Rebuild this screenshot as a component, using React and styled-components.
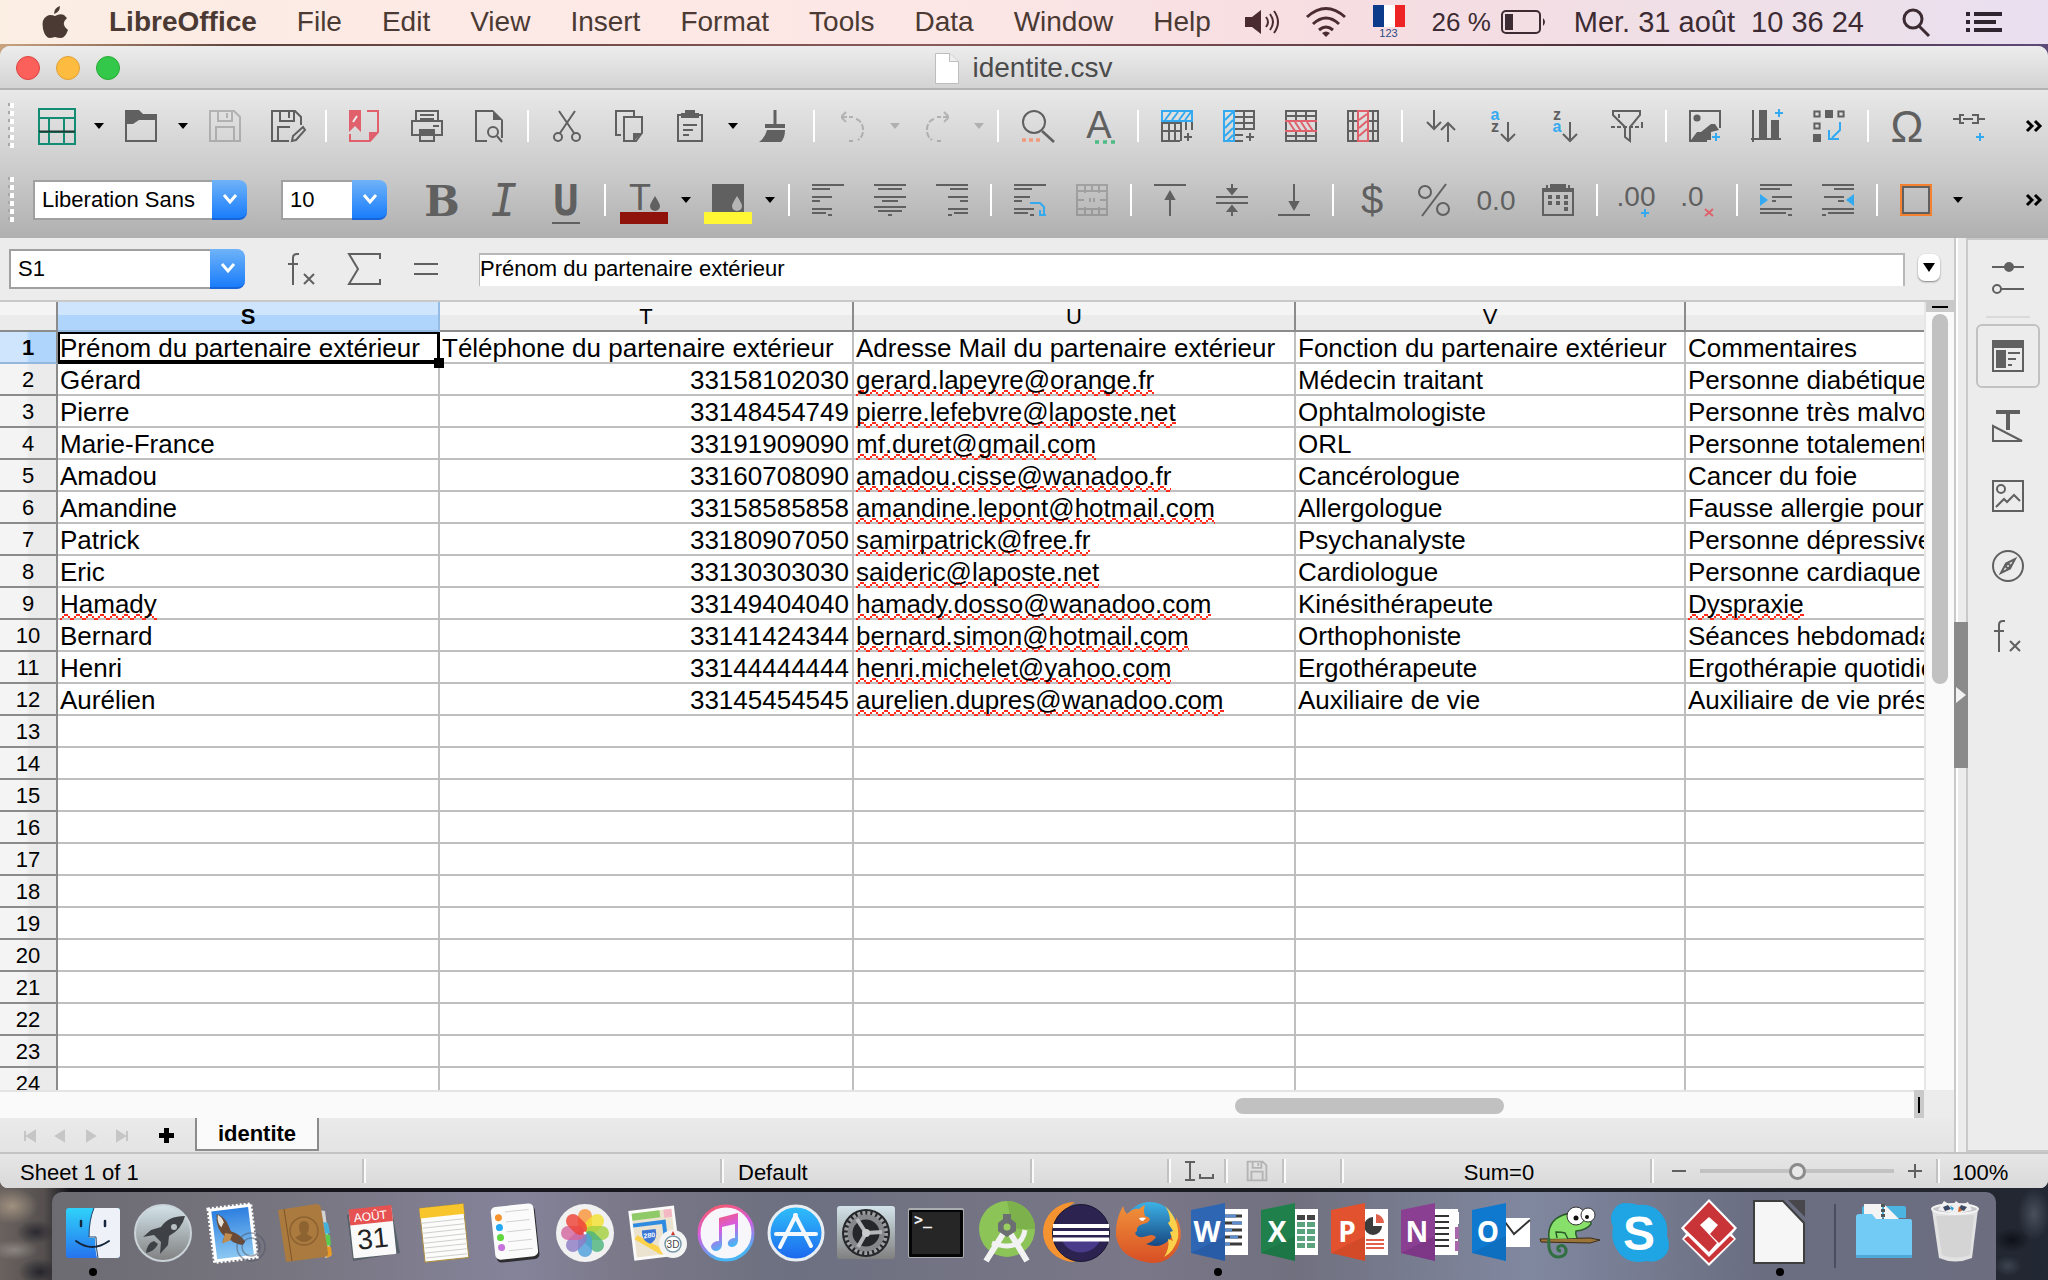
import React from "react";
import styled, { createGlobalStyle, css } from "styled-components";

const INK = "#606060";
const BLUE = "#33aaf0";
const RED = "#e0606c";
const UI = `"Liberation Sans", Arial, sans-serif`;
const NARROW = `"Liberation Sans Narrow", "Liberation Sans", sans-serif`;

const GlobalStyle = createGlobalStyle`
  *, *::before, *::after { box-sizing: border-box; }
  html, body, #root { height: 100%; margin: 0; }
  body { font-family: ${UI}; font-size: 22px; color: #000; overflow: hidden; }
  button, input, select { font: inherit; color: inherit; margin: 0; }
  button { border: 0; padding: 0; background: none; }
`;

/* ---------- desktop and menu bar ---------- */

const Desktop = styled.div`
  display: flex;
  flex-direction: column;
  height: 100%;
  background:
    linear-gradient(90deg, #c9a27e 0, #5c403c 12%, #8a5a5c 45%, #4c3038 80%, #5d4a78 100%) top / 100% 60px no-repeat,
    radial-gradient(ellipse 26px 18px at 12px calc(100% - 74px), #a0917f, transparent),
    radial-gradient(ellipse 20px 12px at 36px calc(100% - 48px), #2b2a30, transparent),
    radial-gradient(ellipse 24px 10px at 14px calc(100% - 30px), #8b8580, transparent),
    radial-gradient(ellipse 22px 14px at 40px calc(100% - 8px), #25252b, transparent),
    radial-gradient(ellipse 16px 26px at calc(100% - 14px) calc(100% - 66px), #4a505c, transparent),
    radial-gradient(ellipse 18px 12px at calc(100% - 36px) calc(100% - 40px), #0e1118, transparent),
    radial-gradient(ellipse 14px 10px at calc(100% - 40px) calc(100% - 14px), #3d4450, transparent),
    linear-gradient(90deg, #6a625f 0, #55504f 44px, #14141a 70px, #191a20 50%, #23262e 96%, #222834 100%);
`;

const MenuBar = styled.header`
  display: flex;
  align-items: center;
  justify-content: space-between;
  flex: none;
  height: 44px;
  margin-bottom: 2px;
  padding: 0 46px 0 41px;
  line-height: 44px;
  font-size: 28px;
  background: linear-gradient(90deg, #fbeee3 0, #fdeae5 18%, #fde7e6 45%, #f6dde1 66%, #ede0e9 90%, #e9dff0 100%);
`;

const MenuGroup = styled.div`
  display: flex;
  align-items: center;
  gap: ${(p) => p.$gap}px;
  color: ${(p) => p.$color};
`;

const MenuItem = styled.button`
  white-space: nowrap;
  font-weight: ${(p) => (p.$bold ? "bold" : "normal")};
`;

const Battery = styled.div`
  display: flex;
  align-items: center;
  gap: 10px;
  font-size: 26px;
`;

const Clock = styled.span`
  font-size: 29px;
  white-space: pre;
`;

const Flag = styled.div`
  display: flex;
  flex-direction: column;
  align-items: center;
  font-size: 11px;
  line-height: 12px;
  color: #2b4a80;
`;

/* ---------- window ---------- */

const Window = styled.section`
  display: flex;
  flex-direction: column;
  flex: 1;
  min-height: 0;
  overflow: hidden;
  border-radius: 10px 10px 8px 8px;
  background: #ececec;
`;

const TitleBar = styled.div`
  display: grid;
  grid-template-columns: 1fr auto 1fr;
  align-items: center;
  flex: none;
  height: 44px;
  padding: 2px 16px 0;
  border-bottom: 2px solid #b2b2b2;
  background: linear-gradient(#ededed, #d3d3d3);
`;

const Lights = styled.div`
  display: flex;
  gap: 16px;
`;

const Light = styled.button`
  width: 24px;
  height: 24px;
  border-radius: 50%;
  border: 1px solid ${(p) => p.$edge};
  background: ${(p) => p.$fill};
`;

const Title = styled.h1`
  display: flex;
  align-items: center;
  gap: 13px;
  margin: 0;
  font-size: 28px;
  font-weight: normal;
  line-height: 34px;
  color: #4b4b4b;
`;

const ToolbarArea = styled.div`
  display: flex;
  flex-direction: column;
  gap: 2px;
  flex: none;
  height: 148px;
  background: linear-gradient(#e8e8e8, #cecece 50%, #b0b0b0);
`;

const ToolRow = styled.div`
  display: flex;
  align-items: center;
  height: 72px;
  padding: 0 6px 0 8px;
`;

const Handle = styled.span`
  flex: none;
  width: 6px;
  height: 46px;
  margin-right: ${(p) => p.$after}px;
  background:
    repeating-linear-gradient(#fff 0 5px, transparent 5px 8px) right / 4px 100% no-repeat,
    repeating-linear-gradient(#a8a8a8 0 3px, transparent 3px 8px) left / 2px 100% no-repeat;
`;

const ToolButton = styled.button`
  display: flex;
  align-items: center;
  justify-content: center;
  flex: none;
  width: 62px;
  height: 62px;
  opacity: ${(p) => (p.disabled ? 0.35 : 1)};
`;

const CaretButton = styled.button`
  flex: none;
  width: 22px;
  height: 40px;
  opacity: ${(p) => (p.disabled ? 0.2 : 1)};
  &::before {
    content: "";
    display: block;
    width: 0;
    margin: 0 auto;
    border: 5px solid transparent;
    border-top: 6px solid #000;
    border-bottom: 0;
  }
`;

const Divider = styled.span`
  flex: none;
  width: 2px;
  height: 32px;
  margin: 0 7px;
  background: #fff;
`;

const More = styled.button`
  margin-left: auto;
`;

const Combo = styled.label`
  display: flex;
  flex: none;
  width: ${(p) => p.$width}px;
  height: 40px;
  margin-right: ${(p) => p.$after}px;
`;

const ComboSelect = styled.select`
  flex: 1;
  min-width: 0;
  height: 40px;
  padding: 0 0 1px 7px;
  appearance: none;
  border: 2px solid #a0a0a0;
  border-width: 2px 0 2px 2px;
  border-radius: 0;
  background: #fff;
  outline: none;
`;

const ComboArrow = styled.span`
  display: flex;
  align-items: center;
  justify-content: center;
  width: 35px;
  border-radius: 0 8px 8px 0;
  border-bottom: 2px solid #1763d8;
  background: linear-gradient(#6fb3f8, #1a7dfb);
`;

const Main = styled.div`
  display: flex;
  flex: 1;
  min-height: 0;
`;

const Workspace = styled.main`
  display: flex;
  flex-direction: column;
  flex: 1;
  min-width: 0;
`;

const FormulaBar = styled.div`
  display: flex;
  align-items: center;
  flex: none;
  height: 64px;
  padding: 0 14px 0 9px;
  border-bottom: 2px solid #c9c9c9;
`;

const FormulaButtons = styled.div`
  display: flex;
  width: 192px;
  margin: 0 16px 0 26px;
`;

const FormulaInput = styled.input`
  flex: 1;
  min-width: 0;
  height: 33px;
  margin-right: 13px;
  padding: 0 0 3px 0;
  border: 2px solid #b8b8b8;
  border-width: 2px 2px 0 1px;
  background: #fff;
  outline: none;
`;

const ExpandButton = styled.button`
  width: 22px;
  height: 27px;
  margin-bottom: 4px;
  border-radius: 7px;
  background: #fff;
  box-shadow: 0 1px 2px rgba(0, 0, 0, 0.45);
  &::before {
    content: "";
    display: block;
    width: 0;
    margin: 0 auto;
    border: 6px solid transparent;
    border-top: 9px solid #000;
    border-bottom: 0;
  }
`;

/* ---------- sheet ---------- */

const SheetRow = styled.div`
  display: flex;
  flex: 1;
  min-height: 0;
`;

const SheetView = styled.div`
  flex: 1;
  min-width: 0;
  overflow: hidden;
  background: #fff;
`;

const Table = styled.table`
  width: 100%;
  table-layout: fixed;
  border-collapse: separate;
  border-spacing: 0;
`;

const Col = styled.col`
  width: ${(p) => (p.$width ? `${p.$width}px` : "auto")};
`;

const ColHead = styled.th`
  height: 30px;
  padding: 2px 0 0;
  line-height: 26px;
  font-weight: ${(p) => (p.$active ? "bold" : "normal")};
  border-right: 2px solid ${(p) => (p.$active ? "#94bce4" : "#8b8b8b")};
  border-bottom: 2px solid ${(p) => (p.$active ? "#94b8dc" : "#8b8b8b")};
  background: ${(p) =>
    p.$active
      ? "linear-gradient(#cfe5fe 0 13px, #b0d5fc 13px)"
      : "linear-gradient(#f4f4f4 0 13px, #ebebeb 13px)"};
  &:first-child { border-right-color: #8b8b8b; }
  &:last-child { border-right: 0; }
`;

const RowHead = styled.th`
  height: 32px;
  padding: 2px 0 0;
  line-height: 28px;
  font-weight: ${(p) => (p.$active ? "bold" : "normal")};
  border-right: 2px solid #8b8b8b;
  border-bottom: 2px solid ${(p) => (p.$active ? "#94b8dc" : "#8b8b8b")};
  background: ${(p) =>
    p.$active
      ? "linear-gradient(90deg, #cfe5fe 0 26px, #b0d5fc 30px)"
      : "linear-gradient(90deg, #f4f4f4 0 26px, #ebebeb 30px)"};
`;

const Cell = styled.td`
  height: 32px;
  padding: 2px 3px 0 2px;
  font-size: 26px;
  line-height: 28px;
  white-space: nowrap;
  text-align: ${(p) => (p.$number ? "right" : "left")};
  border-right: 2px solid #bfbfbf;
  border-bottom: 2px solid #bfbfbf;
  &:last-child { border-right: 0; }
  ${(p) =>
    p.$active &&
    css`
      position: relative;
      &::before {
        content: "";
        position: absolute;
        inset: 0 -2px -2px 0;
        border: solid #000;
        border-width: 2px 3px 4px 2px;
      }
      &::after {
        content: "";
        position: absolute;
        right: -6px;
        bottom: -6px;
        width: 10px;
        height: 10px;
        background: #000;
      }
    `}
`;

const Misspelled = styled.span`
  display: inline-block;
  height: 30px;
  margin-bottom: -2px;
  vertical-align: top;
  background:
    linear-gradient(90deg, transparent 4px, #ff2a1a 4px 8px, transparent 8px) 0 24px / 12px 2px repeat-x,
    linear-gradient(90deg, transparent 2px, #ff2a1a 2px 4px, transparent 4px 8px, #ff2a1a 8px 10px, transparent 10px) 0 26px / 12px 2px repeat-x,
    linear-gradient(90deg, #ff2a1a 2px, transparent 2px 10px, #ff2a1a 10px) 0 28px / 12px 2px repeat-x;
`;

const VScroll = styled.div`
  display: flex;
  flex-direction: column;
  align-items: center;
  flex: none;
  width: 30px;
  border-left: 2px solid #e6e6e6;
  background: #fafafa;
`;

const SplitTop = styled.div`
  flex: none;
  width: 28px;
  height: 10px;
  padding: 4px 6px;
  background: #c9c9c9;
  &::before {
    content: "";
    display: block;
    width: 16px;
    height: 2px;
    background: #000;
  }
`;

const VThumb = styled.div`
  width: 16px;
  height: 47%;
  margin-top: 2px;
  border-radius: 8px;
  background: #c1c1c1;
`;

const HScroll = styled.div`
  display: flex;
  flex: none;
  height: 28px;
  padding-right: 30px;
`;

const HTrack = styled.div`
  flex: 1;
  padding: 6px 0;
  border-top: 2px solid #e4e4e4;
  background: #fafafa;
`;

const HThumb = styled.div`
  width: 14.1%;
  height: 16px;
  margin-left: 64.5%;
  border-radius: 8px;
  background: #c1c1c1;
`;

const SplitRight = styled.div`
  width: 10px;
  padding: 7px 4px;
  background: #c9c9c9;
  &::before {
    content: "";
    display: block;
    width: 2px;
    height: 16px;
    background: #000;
  }
`;

const TabBar = styled.div`
  display: flex;
  align-items: flex-start;
  flex: none;
  height: 34px;
  padding-left: 13px;
  background: linear-gradient(#eaeaea, #e4e4e4);
`;

const TabNav = styled.button`
  width: 31px;
  height: 34px;
`;

const AddTab = styled.button`
  width: 34px;
  height: 34px;
  margin: 0 12px;
`;

const SheetTab = styled.button`
  width: 124px;
  height: 33px;
  font-weight: bold;
  border: 2px solid #8b8b8b;
  border-top: 0;
  background: #fafafa;
`;

/* ---------- splitter and sidebar ---------- */

const Splitter = styled.div`
  display: flex;
  align-items: center;
  flex: none;
  width: 14px;
  border: 2px solid #c9c9c9;
  border-width: 0 2px;
  background: linear-gradient(90deg, #fff 2px, #ececec 2px);
`;

const Grip = styled.button`
  display: flex;
  align-items: center;
  justify-content: center;
  flex: none;
  width: 14px;
  height: 146px;
  margin: 0 -2px;
  background: #8a8a8a;
`;

const Sidebar = styled.aside`
  display: flex;
  flex-direction: column;
  align-items: center;
  gap: 6px;
  flex: none;
  width: 80px;
  padding-top: 6px;
  border-top: 2px solid #c9c9c9;
  border-bottom: 2px solid #c9c9c9;
`;

const SideButton = styled.button`
  display: flex;
  align-items: center;
  justify-content: center;
  width: 64px;
  height: 64px;
  border: 2px solid ${(p) => (p.$active ? "#c2c2c2" : "transparent")};
  border-radius: 6px;
`;

const SideRule = styled.hr`
  width: 44px;
  height: 2px;
  margin: 0;
  border: 0;
  background: #dadada;
`;

/* ---------- status bar ---------- */

const StatusBar = styled.footer`
  display: grid;
  grid-template-columns: 366fr 358fr 310fr 137fr 57fr 58fr 58fr 310fr 286fr 108fr;
  align-items: center;
  flex: none;
  height: 36px;
  border-top: 2px solid #c4c4c4;
  background: linear-gradient(#e6e6e6, #d9d9d9);
`;

const StatusCell = styled.div`
  display: flex;
  align-items: center;
  justify-content: ${(p) => (p.$left ? "flex-start" : "center")};
  height: 24px;
  padding-top: ${(p) => (p.$text ? 3 : 0)}px;
  padding-left: ${(p) => (p.$left ? 14 : 2)}px;
  white-space: nowrap;
  border-right: 2px solid #fafafa;
  box-shadow: inset -2px 0 #c2c2c2;
  &:first-child { padding-left: 20px; }
  &:last-child { border: 0; box-shadow: none; padding-left: 12px; }
`;

const ZoomRange = styled.input`
  width: 194px;
  height: 20px;
  margin: 0 14px;
  appearance: none;
  background: linear-gradient(#c2c2c2, #c2c2c2) center / 100% 4px no-repeat;
  &::-webkit-slider-thumb {
    appearance: none;
    width: 17px;
    height: 17px;
    border: 3px solid #8a8a8a;
    border-radius: 50%;
    background: #e8e8e8;
  }
`;

/* ---------- dock ---------- */

const Dock = styled.nav`
  display: flex;
  justify-content: space-between;
  flex: none;
  height: 88px;
  margin: 4px 52px 0;
  padding: 8px 6px 0;
  border-radius: 10px 10px 0 0;
  background: linear-gradient(90deg, #6c6b72 0, #77757f 12%, #85839a 24%, #7a7787 30%, #6c7080 38%, #7a7788 56%, #70707f 64%, #8088a0 76%, #6a6d80 88%, #6c6e80 100%);
`;

const DockItem = styled.button`
  display: flex;
  flex-direction: column;
  align-items: center;
  gap: 3px;
  width: 70px;
`;

const DockDot = styled.span`
  width: 8px;
  height: 8px;
  margin-top: 1px;
  border-radius: 50%;
  background: #000;
`;

const DockRule = styled.span`
  width: 2px;
  height: 64px;
  margin: 4px 13px 4px 19px;
  background: #4b4c60;
`;

/* ---------- drawings ---------- */

const Svg = styled.svg`
  display: block;
  flex: none;
  overflow: visible;
`;

const Glyph = ({ children, size = 32 }) => (
  <Svg width={size} height={size} viewBox="0 0 16 16" fill="none" stroke={INK} strokeWidth="1" aria-hidden="true">
    {children}
  </Svg>
);

const Letter = ({ x, y, size, family = UI, bold, italic, color = INK, children }) => (
  <text
    x={x}
    y={y}
    fontSize={size}
    fontFamily={family}
    fontWeight={bold ? "bold" : "normal"}
    fontStyle={italic ? "italic" : "normal"}
    textAnchor="middle"
    fill={color}
    stroke="none"
  >
    {children}
  </text>
);

const Plus = ({ x, y, color = BLUE }) => <path d={`M${x - 2} ${y}h4M${x} ${y - 2}v4`} stroke={color} />;

const fx = (
  <>
    <path d="M6.5 .5h-1q-2 0-2 2V16M1 5.5h5" />
    <path d="M9 10.5l5 5M14 10.5l-5 5" />
  </>
);

const disk = <path d="M.5 .5h12l3 3v12h-15zM4.5 .5v5h7v-5M9 1.5v2.5M3.5 15.5v-7h9v7" />;

const icons = {
  newSheet: (
    <>
      <path d="M-1 -.5h18v17.5h-18zM-1 4h18M-1 11h18M4 4v13M11.5 4v13" stroke="#128c73" />
      <path d="M-1 10.8h18" stroke="#1e3c34" />
    </>
  ),
  open: (
    <>
      <path d="M.5 5v10.5h15V3.5" />
      <path d="M0 0h7l2 2h7v3H7L4 7H0z" fill={INK} stroke="none" />
    </>
  ),
  save: disk,
  saveAs: (
    <>
      <path d="M9 15.5H.5V.5h11.5l3 3v4M4.5 .5v5h7v-5M9 1v3M3.5 15.5v-7h6" />
      <path d="M10.5 15.5l.5-2.5 5-4.5 1 1.500-4.500 5z" />
    </>
  ),
  pdf: (
    <>
      <path d="M9 .5h5.500V11l-4 4.500H.5V12" stroke={RED} />
      <path d="M0 0h6v11l-3-3-3 3zM10 16v-5h5z" fill={RED} stroke="none" />
      <path d="M4 3L2 6" stroke="#eee" />
    </>
  ),
  print: (
    <>
      <path d="M2.500 5V.5h11V5M4.500 2.500h7M4.500 4.500h7M4 12.500H.5v-7h15v7H12M11 8h3M4 10h8" />
      <path d="M4.500 10v5.500h7V10" />
      <path d="M4 10h8v3H4z" fill={INK} stroke="none" />
    </>
  ),
  preview: (
    <>
      <path d="M7 15.500H1.500V.5H10M14.500 5v9" />
      <path d="M10 0v5h5z" fill={INK} stroke="none" />
      <circle cx="10" cy="11" r="2.500" />
      <path d="M12 13l2.500 3" />
    </>
  ),
  cut: (
    <>
      <path d="M4 .5l7.500 11M12 .5l-7.500 11" />
      <circle cx="3.500" cy="13.500" r="2" />
      <circle cx="12.500" cy="13.500" r="2" />
    </>
  ),
  copy: (
    <>
      <path d="M4 12.500H1.500V.5h9V3M5.500 3.500h9v8l-3 4h-6z" />
      <path d="M10 16v-4.500h4.500z" fill={INK} stroke="none" />
    </>
  ),
  paste: (
    <>
      <path d="M1.500 2.500h12v13h-12zM4 7.500h7M4 10h5M4 12.500h3" />
      <path d="M3 4V1.500h2V0h5v1.500h2V4z" fill={INK} stroke="none" />
    </>
  ),
  brush: (
    <>
      <path d="M8 0v8" strokeWidth="1.500" />
      <path d="M3 7h10v2H3zM4 10h9q0 4-2 6H0q3-2 4-6z" fill={INK} stroke="none" />
    </>
  ),
  undo: <path d="M2 3.500h6M4.500 1L2 3.500 4.500 6M9.500 4.500c4 1 5 8 1 10.500M8 15.500H6" strokeDasharray="3 1" />,
  redo: <path d="M14 3.500H8M11.500 1L14 3.500 11.500 6M6.500 4.500c-4 1-5 8-1 10.500M8 15.500h2" strokeDasharray="3 1" />,
  find: (
    <>
      <ellipse cx="6.500" cy="6" rx="5.500" ry="5.500" />
      <path d="M10.500 10.500l6 5.500" strokeWidth="1.300" />
      <path d="M.5 15h10" stroke="#f19a7c" strokeWidth="1.800" strokeDasharray="2 1.500" />
    </>
  ),
  spelling: (
    <>
      <Letter x="8" y="14" size="19">A</Letter>
      <path d="M6 16h10" stroke="#4dbb84" strokeWidth="1.800" strokeDasharray="2 2" />
    </>
  ),
  rowInsert: (
    <>
      <path d="M.5 5v10.500h9M.5 10.500h9M4 6v9.500M7 6v9.500M10 6v9.500M.5 6.500h9M12.500 6v4M15.500 6v4" />
      <path d="M.5 .5h15v5H.5zM2 5l3-4M5.500 5l3-4M9 5l3-4M12 5l3-4" stroke={BLUE} />
      <Plus x={13.5} y={13.5} color={INK} />
    </>
  ),
  colInsert: (
    <>
      <path d="M6 .5h9.500V9.500H6M6 3.500h9.500M6 6.500h9.500M10.500 .5v9M6 12.500h4M6 15.500h4" />
      <path d="M.5 .5h5v15h-5zM1 5l4-4M1 9l4-4M1 13l4-4M2 15.500l3-3" stroke={BLUE} />
      <Plus x={13.5} y={13.5} color={INK} />
    </>
  ),
  rowDelete: (
    <>
      <path d="M.5 .5h15v15H.5zM.5 3h15M.5 13h15M5.500 .5v5M10.500 .5v5M5.500 11v4.500M10.500 11v4.500" />
      <path d="M0 5.500h16M0 10.500h16M2 6l3 4.500M5 6l3 4.500M8 6l3 4.500M11 6l3 4.500" stroke={RED} />
    </>
  ),
  colDelete: (
    <>
      <path d="M.5 .5h15v15H.5zM3 .5v15M13 .5v15M.5 5.500h5M.5 10.500h5M11 5.500h4.500M11 10.500h4.500" />
      <path d="M5.500 .5h5v15h-5zM6 5l4-3M6 9l4-3.500M6 13l4-3.500" stroke={RED} />
    </>
  ),
  sort: <path d="M4.500 0v9M1 6l3.500 3.500L8 6M11.500 16V7M8 10l3.500-3.500L15 10" />,
  sortAsc: (
    <>
      <Letter x="4" y="5" size="8" bold color={BLUE}>a</Letter>
      <Letter x="4" y="11" size="8" bold>z</Letter>
      <path d="M10.500 6v9.500M7 12l3.500 3.500L14 12" />
    </>
  ),
  sortDesc: (
    <>
      <Letter x="4" y="5" size="8" bold>z</Letter>
      <Letter x="4" y="11" size="8" bold color={BLUE}>a</Letter>
      <path d="M10.500 6v9.500M7 12l3.500 3.500L14 12" />
    </>
  ),
  filter: (
    <>
      <path d="M1 .5h13.500v2l-5 6v7L7 13.500v-5L1 2.500z" />
      <path d="M0 8.500h16M4 2v4M15.500 6v3" strokeDasharray="2 1" />
    </>
  ),
  image: (
    <>
      <path d="M9 15.500H.5V.5h15V9" />
      <circle cx="4" cy="4" r="1.800" fill={INK} stroke="none" />
      <path d="M1 15l3-4h2l5-4h2l2 3-4 1v4z" fill={INK} stroke="none" />
      <Plus x={13.5} y={13.5} />
    </>
  ),
  chart: (
    <>
      <path d="M1 0v16M0 14.500h15" />
      <path d="M4 0h4v14H4zM10 5h4v9h-4z" fill={INK} stroke="none" />
      <Plus x={14} y={1.5} />
    </>
  ),
  pivot: (
    <>
      <path d="M.7 .7h2.600v2.600H.7zM12.700 .7h2.600v2.600h-2.600zM.7 6.700h2.600v2.600H.7z" />
      <path d="M6 0h4v4H6zM0 12h4v4H0z" fill={INK} stroke="none" />
      <path d="M13.500 6v4l-4 4M8 10v4.500h5" stroke={BLUE} />
    </>
  ),
  omega: <Letter x="8" y="16" size="22">Ω</Letter>,
  link: (
    <>
      <path d="M0 4.500h3M5.500 2.500H3.500v4h2M5 4.500h5M9.500 2.500h3v4h-3M12.500 4.500h3.500" />
      <Plus x={13.5} y={13.5} />
    </>
  ),
  bold: <Letter x="8" y="16" size="21" family={`"DejaVu Serif", serif`} bold>B</Letter>,
  italic: <Letter x="8" y="16" size="22" family={`"DejaVu Sans Mono", monospace`} italic>I</Letter>,
  underline: (
    <>
      <Letter x="8" y="15.500" size="21" family={`"DejaVu Sans Mono", monospace`} bold>U</Letter>
      <path d="M1 19.500h14" />
    </>
  ),
  fontColor: (
    <>
      <Letter x="6" y="13" size="18">T</Letter>
      <path d="M13.500 6q2.500 4 2.500 5a2 2 0 0 1-5 0q0-1 2.500-5z" fill={INK} stroke="none" />
      <path d="M-4 14h24v6h-24z" fill="#90130b" stroke="none" />
    </>
  ),
  highlight: (
    <>
      <path d="M0 0h16v14H0z" fill={INK} stroke="none" />
      <path d="M12.500 6q2.500 4 2.500 5a2 2 0 0 1-5 0q0-1 2.500-5z" fill="#b5b5b5" stroke="none" />
      <path d="M-4 14h24v6h-24z" fill="#fff733" stroke="none" />
    </>
  ),
  left: <path d="M0 .5h16M0 2.500h9M0 6.500h10M0 8.500h4M0 12.500h10M0 14.500h7M8 15.500h2" />,
  center: <path d="M0 .5h16M2 2.500h12M0 6.500h16M4 8.500h8M0 11.500h16M2 13.500h12M7 15.500h2" />,
  right: <path d="M0 .5h16M7 2.500h9M6 6.500h10M12 8.500h4M6 12.500h10M9 14.500h7M6 15.500h2" />,
  wrap: (
    <>
      <path d="M0 .5h16M0 2.500h9M0 6.500h8M0 8.500h4M0 12.500h10M0 14.500h7M8 15.500h2" />
      <path d="M8 9.500h5l2 2v4M13 13v2.500h3" stroke={BLUE} />
    </>
  ),
  merge: <path d="M.5 .5h15v15H.5zM.5 3.500h15M.5 12.500h15M4.500 .5v4M8 .5v3M11.500 .5v4M4.500 11.500v4M8 12.500v3M11.500 11.500v4M0 8h4M12 8h4M7 7v2M9 7v2" />,
  top: (
    <>
      <path d="M0 .5h16M8 5v11" />
      <path d="M8 4l2 3.500H6z" fill={INK} />
    </>
  ),
  middle: (
    <>
      <path d="M0 6.500h16M0 9.500h16M8 0v3M8 13v3" />
      <path d="M8 5l2-2.500H6zM8 11l2 2.500H6z" fill={INK} />
    </>
  ),
  bottom: (
    <>
      <path d="M0 15.500h16M8 0v10" />
      <path d="M8 12.500l2-3.500H6z" fill={INK} />
    </>
  ),
  currency: <Letter x="8" y="15" size="20">$</Letter>,
  percent: (
    <>
      <circle cx="3.500" cy="4" r="3" />
      <circle cx="12.500" cy="12.500" r="3" />
      <path d="M14 0L2 16" />
    </>
  ),
  number: <Letter x="8" y="13" size="14" family={NARROW}>0.0</Letter>,
  date: (
    <>
      <path d="M.5 2v13.500h15V2M2.500 .5v2M13.500 .5v2" />
      <path d="M0 2h4V0h8v2h4v2H0z" fill={INK} stroke="none" />
      <path d="M3 6.500h10M3 9.500h10M11 12.500h2" strokeWidth="2" strokeDasharray="2 2" />
    </>
  ),
  addDecimal: (
    <>
      <Letter x="8" y="11" size="14" family={NARROW}>.00</Letter>
      <Plus x={12.5} y={14.5} />
    </>
  ),
  delDecimal: (
    <>
      <Letter x="5" y="11" size="14" family={NARROW}>.0</Letter>
      <path d="M11.500 12.500l4 3.500M15.500 12.500l-4 3.500" stroke={RED} />
    </>
  ),
  indent: (
    <>
      <path d="M0 .5h16M0 2.500h10M6 6.500h10M6 8.500h2M0 12.500h16M0 14.500h13M14 15.500h2" />
      <path d="M0 5l4 3-4 3z" fill={BLUE} stroke="none" />
    </>
  ),
  outdent: (
    <>
      <path d="M0 .5h16M6 2.500h10M1 6.500h10M8 8.500h3M0 12.500h16M3 14.500h13M0 15.500h2" />
      <path d="M16 5l-4 3 4 3z" fill={BLUE} stroke="none" />
    </>
  ),
  border: (
    <>
      <path d="M.5 .5h15v15H.5z" stroke="#f5812f" />
      <path d="M1.500 1.500h13v13h-13z" />
    </>
  ),
  fx,
  sum: <path d="M16 3V.5H.5L5 8 .5 15.500H16V13" />,
  equals: <path d="M2 5.500h12M2 10.500h12" />,
  settings: (
    <>
      <path d="M0 2.500h16M4 13.500h12" />
      <circle cx="8.500" cy="2.500" r="2" fill={INK} />
      <circle cx="2.500" cy="13.500" r="2" />
    </>
  ),
  properties: (
    <>
      <path d="M.5 .5h15v15H.5zM8 6.500h6M8 9.500h4M8 12.500h2" />
      <path d="M0 0h16v4H0zM2 5h5v9H2z" fill={INK} stroke="none" />
    </>
  ),
  styles: (
    <>
      <path d="M2 1h12M8 1v9" strokeWidth="2" />
      <path d="M.5 8v7.500H15z" />
    </>
  ),
  gallery: (
    <>
      <path d="M.5 .5h15v15H.5zM2 13.500l4-4 1.500 1.500L11 7.500l3 3" />
      <circle cx="4.500" cy="4.500" r="2" />
    </>
  ),
  navigator: (
    <>
      <circle cx="8" cy="8" r="7.500" />
      <path d="M11.500 4.500L9 9.200l-4.500 2.300L7 6.800z" />
      <circle cx="8" cy="8" r="1" />
    </>
  ),
};

const Office = ({ color, dark, letter, paper = "M34 9h28v46H34z", children }) => (
  <>
    <path d={paper} fill="#fff" />
    {children}
    <path d="M5 10l34-7v58L5 53z" fill={color} />
    <path d="M5 53L39 36v25z" fill={dark} opacity=".25" />
    <text x="21" y="42" fontSize="28" fontWeight="bold" fontFamily={`"Open Sans", sans-serif`} textAnchor="middle" fill="#fff">
      {letter}
    </text>
  </>
);

const petals = ["#f9953b", "#f2e02f", "#a5cf3f", "#4db37c", "#4f9fdc", "#8d7cc4", "#d4679f", "#ee4236"];

const dockArt = {
  Finder: (
    <>
      <rect x="5" y="8" width="54" height="50" rx="3" fill="url(#finderBlue)" />
      <path d="M33 8h23q3 0 3 3v44q0 3-3 3H36q-2-8-2-20h-6q0-18 5-30z" fill="#eef2f8" />
      <path d="M33 8q-5 12-5 29h7q0 12 2 21" fill="none" stroke="#22446c" strokeWidth="1" />
      <path d="M20 21v5M44 21v5" stroke="#16263c" strokeWidth="2.500" strokeLinecap="round" />
      <path d="M15 41q16 12 33 0" fill="none" stroke="#16263c" strokeWidth="2" strokeLinecap="round" />
    </>
  ),
  Launchpad: (
    <>
      <circle cx="32" cy="33" r="28" fill="url(#silver)" stroke="#c9d3d8" strokeWidth="2" />
      <path d="M54 16q-17 0-24 11l-10 3-8 7 11-2 7 7-1 12 8-9 1-9q13-7 16-20z" fill="#3e4246" />
      <path d="M23 41q-7 2-8 12 9-2 12-9z" fill="#3e4246" />
      <circle cx="43" cy="27" r="3" fill="#b6c0c4" />
    </>
  ),
  Mail: (
    <>
      <g transform="rotate(-7 32 32)">
        <rect x="9" y="6" width="43" height="54" fill="#fff" stroke="#fff" strokeWidth="3" strokeDasharray="2 2" />
        <rect x="12" y="9" width="37" height="48" fill="url(#sky)" />
        <path d="M17 12q6 3 9 9 2 6 3 10 9 4 13 12l-3 3q-8-2-12-7l-8 2 3-6q-8-9-5-23z" fill="#6b4b35" />
        <path d="M18 13q4 3 5 8l-3 5q-4-5-2-13z" fill="#e9e2d8" />
        <path d="M23 32l7 2-3 6-8 2z" fill="#c08b4f" />
      </g>
      <circle cx="49" cy="47" r="14" fill="none" stroke="#4d5468" strokeWidth="1.500" opacity=".5" />
      <circle cx="49" cy="47" r="9" fill="none" stroke="#4d5468" strokeWidth="1.500" opacity=".5" />
    </>
  ),
  Contacts: (
    <>
      <path d="M47 10l6 1 6 45-6 2z" fill="#d3d3d3" />
      <path d="M51 22l5 1 2 10-5 1z" fill="#46b2dc" />
      <path d="M53 34l5 1 1 10-5 1z" fill="#5ccb50" />
      <path d="M54 46l5 1 1 8-5 3z" fill="#e89a22" />
      <path d="M6 10l38-6q4 0 5 4l7 45q0 3-3 4l-39 5z" fill="#ab7a3f" />
      <path d="M12 9l8 52" stroke="#7d5526" strokeWidth="1" />
      <circle cx="32" cy="31" r="14" fill="none" stroke="#8d6331" strokeWidth="1.500" />
      <path d="M32 21q5 0 5 6 0 4-2 6 1 3 6 4-9 10-18 0 5-1 6-4-2-2-2-6 0-6 5-6z" fill="#8d6331" />
    </>
  ),
  Calendar: (
    <>
      <path d="M5 15l44-8 9 46-47 8z" fill="#566068" />
      <g transform="rotate(-6 32 32)">
        <rect x="9" y="9" width="43" height="47" rx="1" fill="#fafafa" />
        <rect x="9" y="7" width="43" height="16" fill="#e65252" />
        <text x="30" y="20" fontSize="12" fontFamily={UI} textAnchor="middle" fill="#fff">AOÛT</text>
        <text x="30" y="48" fontSize="28" fontFamily={UI} textAnchor="middle" fill="#222">31</text>
      </g>
    </>
  ),
  Notes: (
    <g transform="rotate(-6 32 32)">
      <rect x="10" y="6" width="44" height="54" fill="#fcfcfa" stroke="#a88d40" strokeWidth="1" />
      <rect x="10" y="6" width="44" height="10" fill="#f8c52c" />
      <path d="M11 21h42M11 26h42M11 31h42M11 36h42M11 41h42M11 46h42M11 51h42M11 56h42" stroke="#cfcfcf" strokeWidth="1" />
    </g>
  ),
  Reminders: (
    <g transform="rotate(-6 32 32)">
      <rect x="11" y="7" width="43" height="54" rx="5" fill="#2d2d30" />
      <rect x="10" y="5" width="43" height="53" rx="5" fill="#fbfbfb" />
      <path d="M24 11h24M24 21h24M24 31h24M24 41h24M24 50h24" stroke="#d2d2d2" strokeWidth="1" />
      <circle cx="17" cy="16" r="3.500" fill="#f7922d" />
      <circle cx="17" cy="26" r="3.500" fill="#25a8f4" />
      <circle cx="17" cy="36" r="3.500" fill="#62d63f" />
      <circle cx="17" cy="46" r="3.500" fill="#c673dc" />
    </g>
  ),
  Photos: (
    <>
      <circle cx="32" cy="33" r="29" fill="#f1f1f2" />
      {petals.map((c, i) => (
        <rect key={c} x="25" y="9" width="14" height="24" rx="7" fill={c} opacity=".82" transform={`rotate(${i * 45} 32 33)`} />
      ))}
      <circle cx="32" cy="33" r="1.500" fill="#fff" />
    </>
  ),
  Maps: (
    <>
      <g transform="rotate(-7 32 32)">
        <rect x="8" y="8" width="46" height="50" fill="#fafafa" />
        <rect x="11" y="11" width="40" height="44" fill="#ebe3d0" />
        <path d="M11 11h28v7H11z" fill="#8fca68" />
        <path d="M43 11h8v8h-8z" fill="#f3b8c3" />
        <path d="M11 23h31v24" fill="none" stroke="#2f8be0" strokeWidth="4" />
        <path d="M11 37l24 18h10L14 33z" fill="#fbd24a" />
        <path d="M19 29h14v5q-1 7-7 9-6-2-7-9z" fill="#3b76d6" />
        <text x="26" y="37" fontSize="7" fontWeight="bold" fontFamily={UI} textAnchor="middle" fill="#fff">280</text>
      </g>
      <circle cx="50" cy="44" r="14" fill="#f4f4f4" />
      <circle cx="50" cy="44" r="8" fill="#fff" stroke="#7798a8" strokeWidth="1.500" />
      <text x="50" y="48" fontSize="10" fontFamily={UI} textAnchor="middle" fill="#444">3D</text>
      <path d="M50 31l2 4h-4z" fill="#d23a2e" />
    </>
  ),
  iTunes: (
    <>
      <circle cx="32" cy="33" r="27" fill="#f6f6fb" stroke="url(#rainbow)" strokeWidth="3" />
      <path d="M25 18l19-5v28q-1 6-7 6-4-1-3-5 2-4 7-4V24l-13 3v18q-1 6-7 6-4-1-4-5 2-5 8-5z" fill="url(#rainbow)" />
    </>
  ),
  "App Store": (
    <>
      <circle cx="32" cy="33" r="27" fill="url(#store)" stroke="#e9eef3" strokeWidth="3" />
      <path d="M32 15L16 47M31 15l16 31M12 34h40" stroke="#f3f8fd" strokeWidth="4" strokeLinecap="round" />
    </>
  ),
  "System Preferences": (
    <>
      <rect x="3" y="6" width="58" height="53" rx="3" fill="url(#silver)" />
      <circle cx="32" cy="33" r="24" fill="#25272a" />
      <circle cx="32" cy="33" r="20" fill="none" stroke="#9c9ea0" strokeWidth="4" strokeDasharray="3 2" />
      <circle cx="32" cy="33" r="16" fill="none" stroke="#85878a" strokeWidth="5" />
      <path d="M32 33l16-1M32 33l-9-14M32 33l-8 14" stroke="#b4b6b8" strokeWidth="4" />
      <circle cx="32" cy="33" r="4" fill="#c9cbcd" />
    </>
  ),
  Terminal: (
    <>
      <rect x="4" y="8" width="56" height="50" rx="2" fill="#a9adb0" />
      <rect x="5" y="10" width="54" height="47" rx="1" fill="#050505" />
      <rect x="8" y="12" width="48" height="42" fill="#262626" />
      <text x="10" y="25" fontSize="15" fontWeight="bold" fontFamily={`"DejaVu Sans Mono", monospace`} fill="#f2f2f2">&gt;_</text>
    </>
  ),
  "Android Studio": (
    <>
      <circle cx="32" cy="29" r="28" fill="#8dc458" />
      <path d="M32 1a28 28 0 0 1 28 28H38z" fill="#7db14c" />
      <path d="M33 26L11 61M31 26l21 35" stroke="#f2f2f2" strokeWidth="6" />
      <path d="M17 43q29 10 33-13" fill="none" stroke="#f2f2f2" strokeWidth="5" />
      <path d="M28 14h8v5l5 4v8l-9 6-9-6v-8l5-4z" fill="#6b6f72" />
      <circle cx="32" cy="27" r="3.500" fill="#9bd060" />
    </>
  ),
  Eclipse: (
    <>
      <path d="M30 2a32 30 0 0 0 0 60Q10 45 12 32 12 14 30 2z" fill="#f59330" />
      <circle cx="36" cy="33" r="28.500" fill="#2c2350" stroke="#191733" strokeWidth="1" />
      <path d="M17 40a20 18 0 0 0 38 0z" fill="#4a3a8a" />
      <path d="M8 26h56M8 33h56M8 39.500h56" stroke="#fff" strokeWidth="4" />
    </>
  ),
  Firefox: (
    <>
      <circle cx="35" cy="29" r="27" fill="url(#globe)" />
      <path d="M8 6q1 5 4 8 6-6 12-5 3-3 6-4-2 6 0 11 4 1 5 3-1 4-7 5-7 2-6 7l-2 2q2 5 8 4l8-2q3 0 5 2-3 5-10 7 14 6 24-5 7-8 6-22 8 14 3 28-8 18-27 18Q4 59 1 36 0 20 8 6z" fill="url(#fox)" />
      <path d="M50 6q15 14 13 32-4 14-14 19 6-9 4-18l5 2-3-9 3-1-5-8 2-2q0-8-5-15z" fill="#fbd14b" />
      <path d="M24 18q4-1 7 0l-3 3q-3 0-4-3z" fill="#fff" />
    </>
  ),
  Word: (
    <Office color="#2f66b4" dark="#16407c" letter="W">
      <path d="M38 16h18M38 23h18M38 30h18M38 37h18M38 44h18" stroke="#3a3a3a" strokeWidth="3" />
      <path d="M38 16h12M46 23h10M38 30h8M44 37h8M38 44h6" stroke="#5c8ccc" strokeWidth="3" />
    </Office>
  ),
  Excel: (
    <Office color="#20804c" dark="#0e5630" letter="X">
      <path d="M41 15h8v5h-8zM51 15h8v5h-8z" fill="#444" />
      <path d="M41 22h8v5h-8zM51 22h8v5h-8zM41 29h8v5h-8zM51 29h8v5h-8zM41 36h8v5h-8zM51 36h8v5h-8zM41 43h8v5h-8zM51 43h8v5h-8z" fill="#5ba37c" />
    </Office>
  ),
  PowerPoint: (
    <Office color="#e2522f" dark="#a93414" letter="P">
      <path d="M47 17a9 9 0 1 0 9 9h-9z" fill="#3c3c3c" />
      <path d="M50 14a9 9 0 0 1 8 9h-8zM40 39h18v2H40zM40 43h18v2H40zM40 47h18v2H40z" fill="#e0604c" />
    </Office>
  ),
  OneNote: (
    <Office color="#8b3f93" dark="#561c60" letter="N">
      <path d="M60 12h3v12h-3z" fill="#fff" />
      <path d="M59 27h4v12h-4zM59 41h4v10h-4z" fill="#a568ab" />
      <path d="M39 16h14M39 22h14M39 28h14M39 34h14M39 40h14M39 46h14" stroke="#333" strokeWidth="2" />
    </Office>
  ),
  Outlook: (
    <Office color="#0f78cf" dark="#0b4f94" letter="O" paper="M34 18h29v29H34z">
      <path d="M38 22l9 12 16-14" fill="none" stroke="#333" strokeWidth="2" />
    </Office>
  ),
  Chameleon: (
    <g transform="translate(2 0)">
      <path d="M1 39l50-1 10 2-10 3-49-1z" fill="#9c7438" stroke="#3a2b18" strokeWidth="1" />
      <path d="M10 39q-2-18 14-24 8-3 14 2 14 0 14 7-4 6-15 7-1 3 1 7M18 38l-1-6q6 0 9 1l3 6" fill="#86e06a" stroke="#2c5a2a" strokeWidth="1.500" />
      <path d="M10 38q-2 19 10 19 8-1 7-8-3-6-8-2-1 4 3 4" fill="none" stroke="#2f6f40" strokeWidth="3" />
      <circle cx="37" cy="16" r="9" fill="#fff" stroke="#333" strokeWidth="1" />
      <circle cx="49" cy="15" r="7" fill="#fff" stroke="#333" strokeWidth="1" />
      <circle cx="37" cy="18" r="2.500" fill="#111" />
      <circle cx="48" cy="17" r="2" fill="#111" />
    </g>
  ),
  Skype: (
    <>
      <path d="M18 3q9 0 13 2 20-2 28 17 2 7 1 14 4 9 0 17-8 11-20 8-24 5-33-17-3-8-1-17-5-11 2-19 4-5 10-5z" fill="#1fa5e4" />
      <text x="32" y="50" fontSize="48" fontWeight="bold" fontFamily={UI} textAnchor="middle" fill="#fff">S</text>
    </>
  ),
  "Visual Paradigm": (
    <>
      <path d="M32 -1l28 29-5 6 4 5-27 27L5 39l4-5-5-6z" fill="#fff" />
      <path d="M32 2l25 26-15 15-9-9 8-9-9-8-9 8 17 18-8 9L7 28z" fill="#c93438" />
      <path d="M11 36l21 21 21-21 4 3-25 24L7 39z" fill="#c93438" />
    </>
  ),
  LibreOffice: (
    <>
      <path d="M6 1h29l21 22v40H6z" fill="#f6f6f6" stroke="#3e3e3e" strokeWidth="2" />
      <path d="M40 0h17v17z" fill="#48484c" />
    </>
  ),
  Documents: (
    <>
      <path d="M10 18V8q0-2 2-2h40q2 0 2 2v10z" fill="#4bb4e0" />
      <path d="M12 4h18v16H12zM32 4l16 16H32z" fill="#f4f4f4" />
      <path d="M31 4v15" stroke="#555" strokeWidth="4" strokeDasharray="3 2" />
      <path d="M4 17q0-3 3-3h13l4 5h34q2 0 2 2v35q0 2-2 2H6q-2 0-2-2z" fill="#72cbf5" />
      <path d="M4 55h56v1q0 2-2 2H6q-2 0-2-2z" fill="#4fa9d8" />
    </>
  ),
  Trash: (
    <>
      <path d="M9 10l46-1-6 49q-17 7-33 0z" fill="#e2e2e2" />
      <path d="M13 16l38-1-4 40q-14 5-28 0z" fill="#cfcfd0" opacity=".7" />
      <ellipse cx="32" cy="9" rx="23" ry="5" fill="#c6c6ca" stroke="#f4f4f4" strokeWidth="2" />
      <path d="M15 10l6-9 8 5 4-5 5 4 7-3 4 8-16 4z" fill="#f0f0f0" />
      <path d="M20 7l5-2 3 4-6 2zM38 5l6 2-3 4-5-2z" fill="#3a4a66" />
      <path d="M27 6l4 2-2 3z" fill="#2e9fd6" />
      <path d="M36 6l3 5-4 1z" fill="#d2642c" />
    </>
  ),
};

/* ---------- data ---------- */

const menus = ["File", "Edit", "View", "Insert", "Format", "Tools", "Data", "Window", "Help"];

const standardBar = [
  "newSheet", "v", "open", "v", "save*", "saveAs", "|", "pdf", "print", "preview", "|",
  "cut", "copy", "paste", "v", "brush", "|", "undo*", "v*", "redo*", "v*", "|", "find", "spelling", "|",
  "rowInsert", "colInsert", "rowDelete", "colDelete", "|", "sort", "sortAsc", "sortDesc", "filter", "|",
  "image", "chart", "pivot", "|", "omega", "link",
];

const formatBar = [
  "bold", "italic", "underline", "|", "fontColor", "v", "highlight", "v", "|", "left", "center", "right", "|",
  "wrap", "merge*", "|", "top", "middle", "bottom", "|", "currency", "percent", "number", "date", "|",
  "addDecimal", "delDecimal", "|", "indent", "outdent", "|", "border", "v",
];

const columns = [
  { name: "S", width: 382 },
  { name: "T", width: 414 },
  { name: "U", width: 442 },
  { name: "V", width: 390 },
  { name: "" },
];

const rows = [
  ["Prénom du partenaire extérieur", "Téléphone du partenaire extérieur", "Adresse Mail du partenaire extérieur", "Fonction du partenaire extérieur", "Commentaires"],
  ["Gérard", "33158102030", "gerard.lapeyre@orange.fr", "Médecin traitant", "Personne diabétique"],
  ["Pierre", "33148454749", "pierre.lefebvre@laposte.net", "Ophtalmologiste", "Personne très malvoyante"],
  ["Marie-France", "33191909090", "mf.duret@gmail.com", "ORL", "Personne totalement"],
  ["Amadou", "33160708090", "amadou.cisse@wanadoo.fr", "Cancérologue", "Cancer du foie"],
  ["Amandine", "33158585858", "amandine.lepont@hotmail.com", "Allergologue", "Fausse allergie pour"],
  ["Patrick", "33180907050", "samirpatrick@free.fr", "Psychanalyste", "Personne dépressive"],
  ["Eric", "33130303030", "saideric@laposte.net", "Cardiologue", "Personne cardiaque"],
  ["Hamady", "33149404040", "hamady.dosso@wanadoo.com", "Kinésithérapeute", "Dyspraxie"],
  ["Bernard", "33141424344", "bernard.simon@hotmail.com", "Orthophoniste", "Séances hebdomadaires"],
  ["Henri", "33144444444", "henri.michelet@yahoo.com", "Ergothérapeute", "Ergothérapie quotidienne"],
  ["Aurélien", "33145454545", "aurelien.dupres@wanadoo.com", "Auxiliaire de vie", "Auxiliaire de vie présente"],
];

const ROW_COUNT = 24;
const unknownWords = new Set(["Hamady", "Dyspraxie"]);
const isMisspelled = (text) => text.includes("@") || unknownWords.has(text);

const dockApps = [
  "Finder", "Launchpad", "Mail", "Contacts", "Calendar", "Notes", "Reminders", "Photos", "Maps", "iTunes",
  "App Store", "System Preferences", "Terminal", "Android Studio", "Eclipse", "Firefox", "Word", "Excel",
  "PowerPoint", "OneNote", "Outlook", "Chameleon", "Skype", "Visual Paradigm", "LibreOffice",
];
const running = new Set(["Finder", "Word", "LibreOffice"]);

/* ---------- composed parts ---------- */

const Tools = ({ items }) =>
  items.map((item, i) => {
    const off = item.endsWith("*");
    const name = item.replace("*", "");
    if (name === "|") return <Divider key={i} />;
    if (name === "v") return <CaretButton key={i} disabled={off} aria-label="More options" />;
    return (
      <ToolButton key={i} disabled={off} aria-label={name}>
        <Glyph>{icons[name]}</Glyph>
      </ToolButton>
    );
  });

const Dropdown = ({ label, value, width, after }) => (
  <Combo $width={width} $after={after}>
    <ComboSelect aria-label={label} defaultValue={value}>
      <option>{value}</option>
    </ComboSelect>
    <ComboArrow>
      <Svg width="16" height="12" viewBox="0 0 16 12" fill="none" stroke="#fff" strokeWidth="3">
        <path d="M2 2l6 7 6-7" />
      </Svg>
    </ComboArrow>
  </Combo>
);

const Chevrons = () => (
  <More aria-label="More tools">
    <Svg width="16" height="12" viewBox="0 0 16 12" fill="none" stroke="#000" strokeWidth="3">
      <path d="M1 1l5 5-5 5M9 1l5 5-5 5" />
    </Svg>
  </More>
);

const DockApp = ({ name }) => (
  <DockItem aria-label={name}>
    <Svg width="64" height="64" viewBox="0 0 64 64" fill="none" aria-hidden="true">{dockArt[name]}</Svg>
    {running.has(name) && <DockDot />}
  </DockItem>
);

const Gradients = () => (
  <Svg width="0" height="0" aria-hidden="true">
    <defs>
      <linearGradient id="finderBlue" x2="0" y2="1"><stop stopColor="#2fd2fa" /><stop offset="1" stopColor="#2673ee" /></linearGradient>
      <linearGradient id="silver" x2="0" y2="1"><stop stopColor="#d3e4ea" /><stop offset="1" stopColor="#808080" /></linearGradient>
      <linearGradient id="sky" x2="0" y2="1"><stop stopColor="#2d7fe0" /><stop offset="1" stopColor="#8cc8f2" /></linearGradient>
      <linearGradient id="store" x2="0" y2="1"><stop stopColor="#2fc0fa" /><stop offset="1" stopColor="#1d67ee" /></linearGradient>
      <linearGradient id="rainbow" x2="0.3" y2="1"><stop stopColor="#fb5a5c" /><stop offset=".5" stopColor="#d75be0" /><stop offset="1" stopColor="#49b4f4" /></linearGradient>
      <linearGradient id="globe" x2="0" y2="1"><stop stopColor="#3cb2e6" /><stop offset="1" stopColor="#10306c" /></linearGradient>
      <linearGradient id="fox" x2="0" y2="1"><stop stopColor="#f0913a" /><stop offset="1" stopColor="#d84f24" /></linearGradient>
    </defs>
  </Svg>
);

const navShapes = [
  ["First sheet", "M12 13v10M22 13v10l-8-5z"],
  ["Previous sheet", "M20 13v10l-8-5z"],
  ["Next sheet", "M12 13v10l8-5z"],
  ["Last sheet", "M11 13v10l8-5zM21 13v10"],
];

export default function App() {
  return (
    <Desktop>
      <GlobalStyle />
      <MenuBar>
        <MenuGroup $gap={40} $color="#4b3a33">
          <Svg width="28" height="34" viewBox="0 0 28 34" fill="#4b3a33" aria-label="Apple">
            <path d="M19 1q0 6-6 8 0-6 6-8zM14 11q5-3 9-1l3 3q-7 6 1 12-3 8-7 8-3 0-6-1-3 1-6 1-4-1-6-9Q0 14 6 11q3-2 8 0z" />
          </Svg>
          <MenuItem $bold>LibreOffice</MenuItem>
          {menus.map((m) => (
            <MenuItem key={m}>{m}</MenuItem>
          ))}
        </MenuGroup>
        <MenuGroup $gap={27} $color="#3d2b33">
          <Svg width="34" height="26" viewBox="0 0 34 26" fill="none" stroke="#4a2c30" strokeWidth="2">
            <path d="M0 8h7l9-7v24l-9-7H0z" fill="#4a2c30" stroke="none" />
            <path d="M21 8q4 5 0 10M25 5q6 8 0 16M29 2q8 11 0 22" />
          </Svg>
          <Svg width="40" height="30" viewBox="0 0 40 30" fill="none" stroke="#4a2c30" strokeWidth="3">
            <path d="M1 10q19-17 38 0M7 17q13-12 26 0M13 23q7-6 14 0" />
            <path d="M20 30l-4-4q4-3 8 0z" fill="#4a2c30" stroke="none" />
          </Svg>
          <Flag>
            <Svg width="32" height="22" viewBox="0 0 32 22">
              <path d="M0 0h11v22H0z" fill="#0c3b8c" />
              <path d="M11 0h11v22H11z" fill="#fff" />
              <path d="M22 0h10v22H22z" fill="#ee2424" />
            </Svg>
            123
          </Flag>
          <Battery>
            <span>26 %</span>
            <Svg width="46" height="24" viewBox="0 0 46 24" fill="none" stroke="#3d2b33" strokeWidth="2">
              <rect x="1" y="1" width="38" height="22" rx="4" />
              <path d="M4 4h8v16H4zM42 8q4 4 0 8z" fill="#3d2b33" stroke="none" />
            </Svg>
          </Battery>
          <Clock>{"Mer. 31 août  10 36 24"}</Clock>
          <Svg width="48" height="28" viewBox="-11 0 48 28" fill="none" stroke="#3d2b33" strokeWidth="3">
            <circle cx="11" cy="11" r="9" />
            <path d="M17 18l10 10" />
          </Svg>
          <Svg width="36" height="20" viewBox="0 0 36 20" stroke="#2f2530" strokeWidth="4">
            <path d="M0 2h4M8 2h28M0 10h4M8 10h22M0 18h4M8 18h28" />
          </Svg>
        </MenuGroup>
      </MenuBar>

      <Window>
        <TitleBar>
          <Lights>
            <Light $fill="#fc605b" $edge="#e0443e" aria-label="Close" />
            <Light $fill="#fdbc40" $edge="#dea034" aria-label="Minimize" />
            <Light $fill="#34c84a" $edge="#27aa35" aria-label="Zoom" />
          </Lights>
          <Title>
            <Svg width="24" height="31" viewBox="0 0 24 31">
              <path d="M.5 .5h14l9 8v22H.5z" fill="#fff" stroke="#bdbdbd" />
              <path d="M14.500 .5v8h9" fill="#eee" stroke="#bdbdbd" />
            </Svg>
            identite.csv
          </Title>
          <span />
        </TitleBar>

        <ToolbarArea>
          <ToolRow>
            <Handle $after={12} />
            <Tools items={standardBar} />
            <Chevrons />
          </ToolRow>
          <ToolRow>
            <Handle $after={19} />
            <Dropdown label="Font name" value="Liberation Sans" width={214} after={34} />
            <Dropdown label="Font size" value="10" width={106} after={24} />
            <Tools items={formatBar} />
            <Chevrons />
          </ToolRow>
        </ToolbarArea>

        <Main>
          <Workspace>
            <FormulaBar>
              <Dropdown label="Name box" value="S1" width={236} after={0} />
              <FormulaButtons>
                {["fx", "sum", "equals"].map((n) => (
                  <ToolButton key={n} aria-label={n}>
                    <Glyph>{icons[n]}</Glyph>
                  </ToolButton>
                ))}
              </FormulaButtons>
              <FormulaInput aria-label="Input line" defaultValue="Prénom du partenaire extérieur" />
              <ExpandButton aria-label="Expand formula bar" />
            </FormulaBar>

            <SheetRow>
              <SheetView>
                <Table>
                  <colgroup>
                    <Col $width={58} />
                    {columns.map((c) => (
                      <Col key={c.name} $width={c.width} />
                    ))}
                  </colgroup>
                  <thead>
                    <tr>
                      <ColHead />
                      {columns.map((c, i) => (
                        <ColHead key={c.name} $active={i === 0} scope="col">{c.name}</ColHead>
                      ))}
                    </tr>
                  </thead>
                  <tbody>
                    {Array.from({ length: ROW_COUNT }, (_, r) => (
                      <tr key={r}>
                        <RowHead $active={r === 0} scope="row">{r + 1}</RowHead>
                        {columns.map((c, i) => {
                          const text = rows[r] ? rows[r][i] : "";
                          return (
                            <Cell key={c.name} $active={r === 0 && i === 0} $number={r > 0 && i === 1}>
                              {isMisspelled(text) ? <Misspelled>{text}</Misspelled> : text}
                            </Cell>
                          );
                        })}
                      </tr>
                    ))}
                  </tbody>
                </Table>
              </SheetView>
              <VScroll>
                <SplitTop />
                <VThumb />
              </VScroll>
            </SheetRow>

            <HScroll>
              <HTrack><HThumb /></HTrack>
              <SplitRight />
            </HScroll>

            <TabBar>
              {navShapes.map(([label, d]) => (
                <TabNav key={label} disabled aria-label={label}>
                  <Svg width="31" height="34" viewBox="0 0 31 34" fill="#c6c6c6" stroke="#c6c6c6" strokeWidth="2">
                    <path d={d} />
                  </Svg>
                </TabNav>
              ))}
              <AddTab aria-label="Add sheet">
                <Svg width="34" height="34" viewBox="0 0 34 34">
                  <path d="M15 10h5v5h5v5h-5v5h-5v-5h-5v-5h5z" />
                </Svg>
              </AddTab>
              <SheetTab>identite</SheetTab>
            </TabBar>
          </Workspace>

          <Splitter>
            <Grip aria-label="Hide sidebar">
              <Svg width="12" height="16" viewBox="0 0 12 16" fill="#f2f2f2">
                <path d="M1 0l10 8-10 8z" />
              </Svg>
            </Grip>
          </Splitter>

          <Sidebar>
            <SideButton aria-label="Sidebar settings"><Glyph>{icons.settings}</Glyph></SideButton>
            <SideRule />
            {["properties", "styles", "gallery", "navigator", "fx"].map((n, i) => (
              <SideButton key={n} $active={i === 0} aria-label={n}>
                <Glyph>{icons[n]}</Glyph>
              </SideButton>
            ))}
          </Sidebar>
        </Main>

        <StatusBar>
          <StatusCell $left $text>Sheet 1 of 1</StatusCell>
          <StatusCell />
          <StatusCell $left $text>Default</StatusCell>
          <StatusCell />
          <StatusCell>
            <Svg width="30" height="22" viewBox="0 0 30 22" fill="none" stroke={INK} strokeWidth="2">
              <path d="M0 2h10M5 2v18M0 20h10M15 14v4h13v-4" />
            </Svg>
          </StatusCell>
          <StatusCell>
            <Svg width="20" height="20" viewBox="0 0 16 16" fill="none" stroke="#b4b4b4" strokeWidth="1.500">{disk}</Svg>
          </StatusCell>
          <StatusCell />
          <StatusCell $text>Sum=0</StatusCell>
          <StatusCell>
            <Svg width="14" height="14" viewBox="0 0 14 14" stroke={INK} strokeWidth="2"><path d="M0 7h14" /></Svg>
            <ZoomRange type="range" min="0" max="100" defaultValue="50" aria-label="Zoom" />
            <Svg width="14" height="14" viewBox="0 0 14 14" stroke={INK} strokeWidth="2"><path d="M0 7h14M7 0v14" /></Svg>
          </StatusCell>
          <StatusCell $left $text>100%</StatusCell>
        </StatusBar>
      </Window>

      <Dock>
        {dockApps.map((name) => (
          <DockApp key={name} name={name} />
        ))}
        <DockRule />
        <DockApp name="Documents" />
        <DockApp name="Trash" />
      </Dock>
      <Gradients />
    </Desktop>
  );
}
